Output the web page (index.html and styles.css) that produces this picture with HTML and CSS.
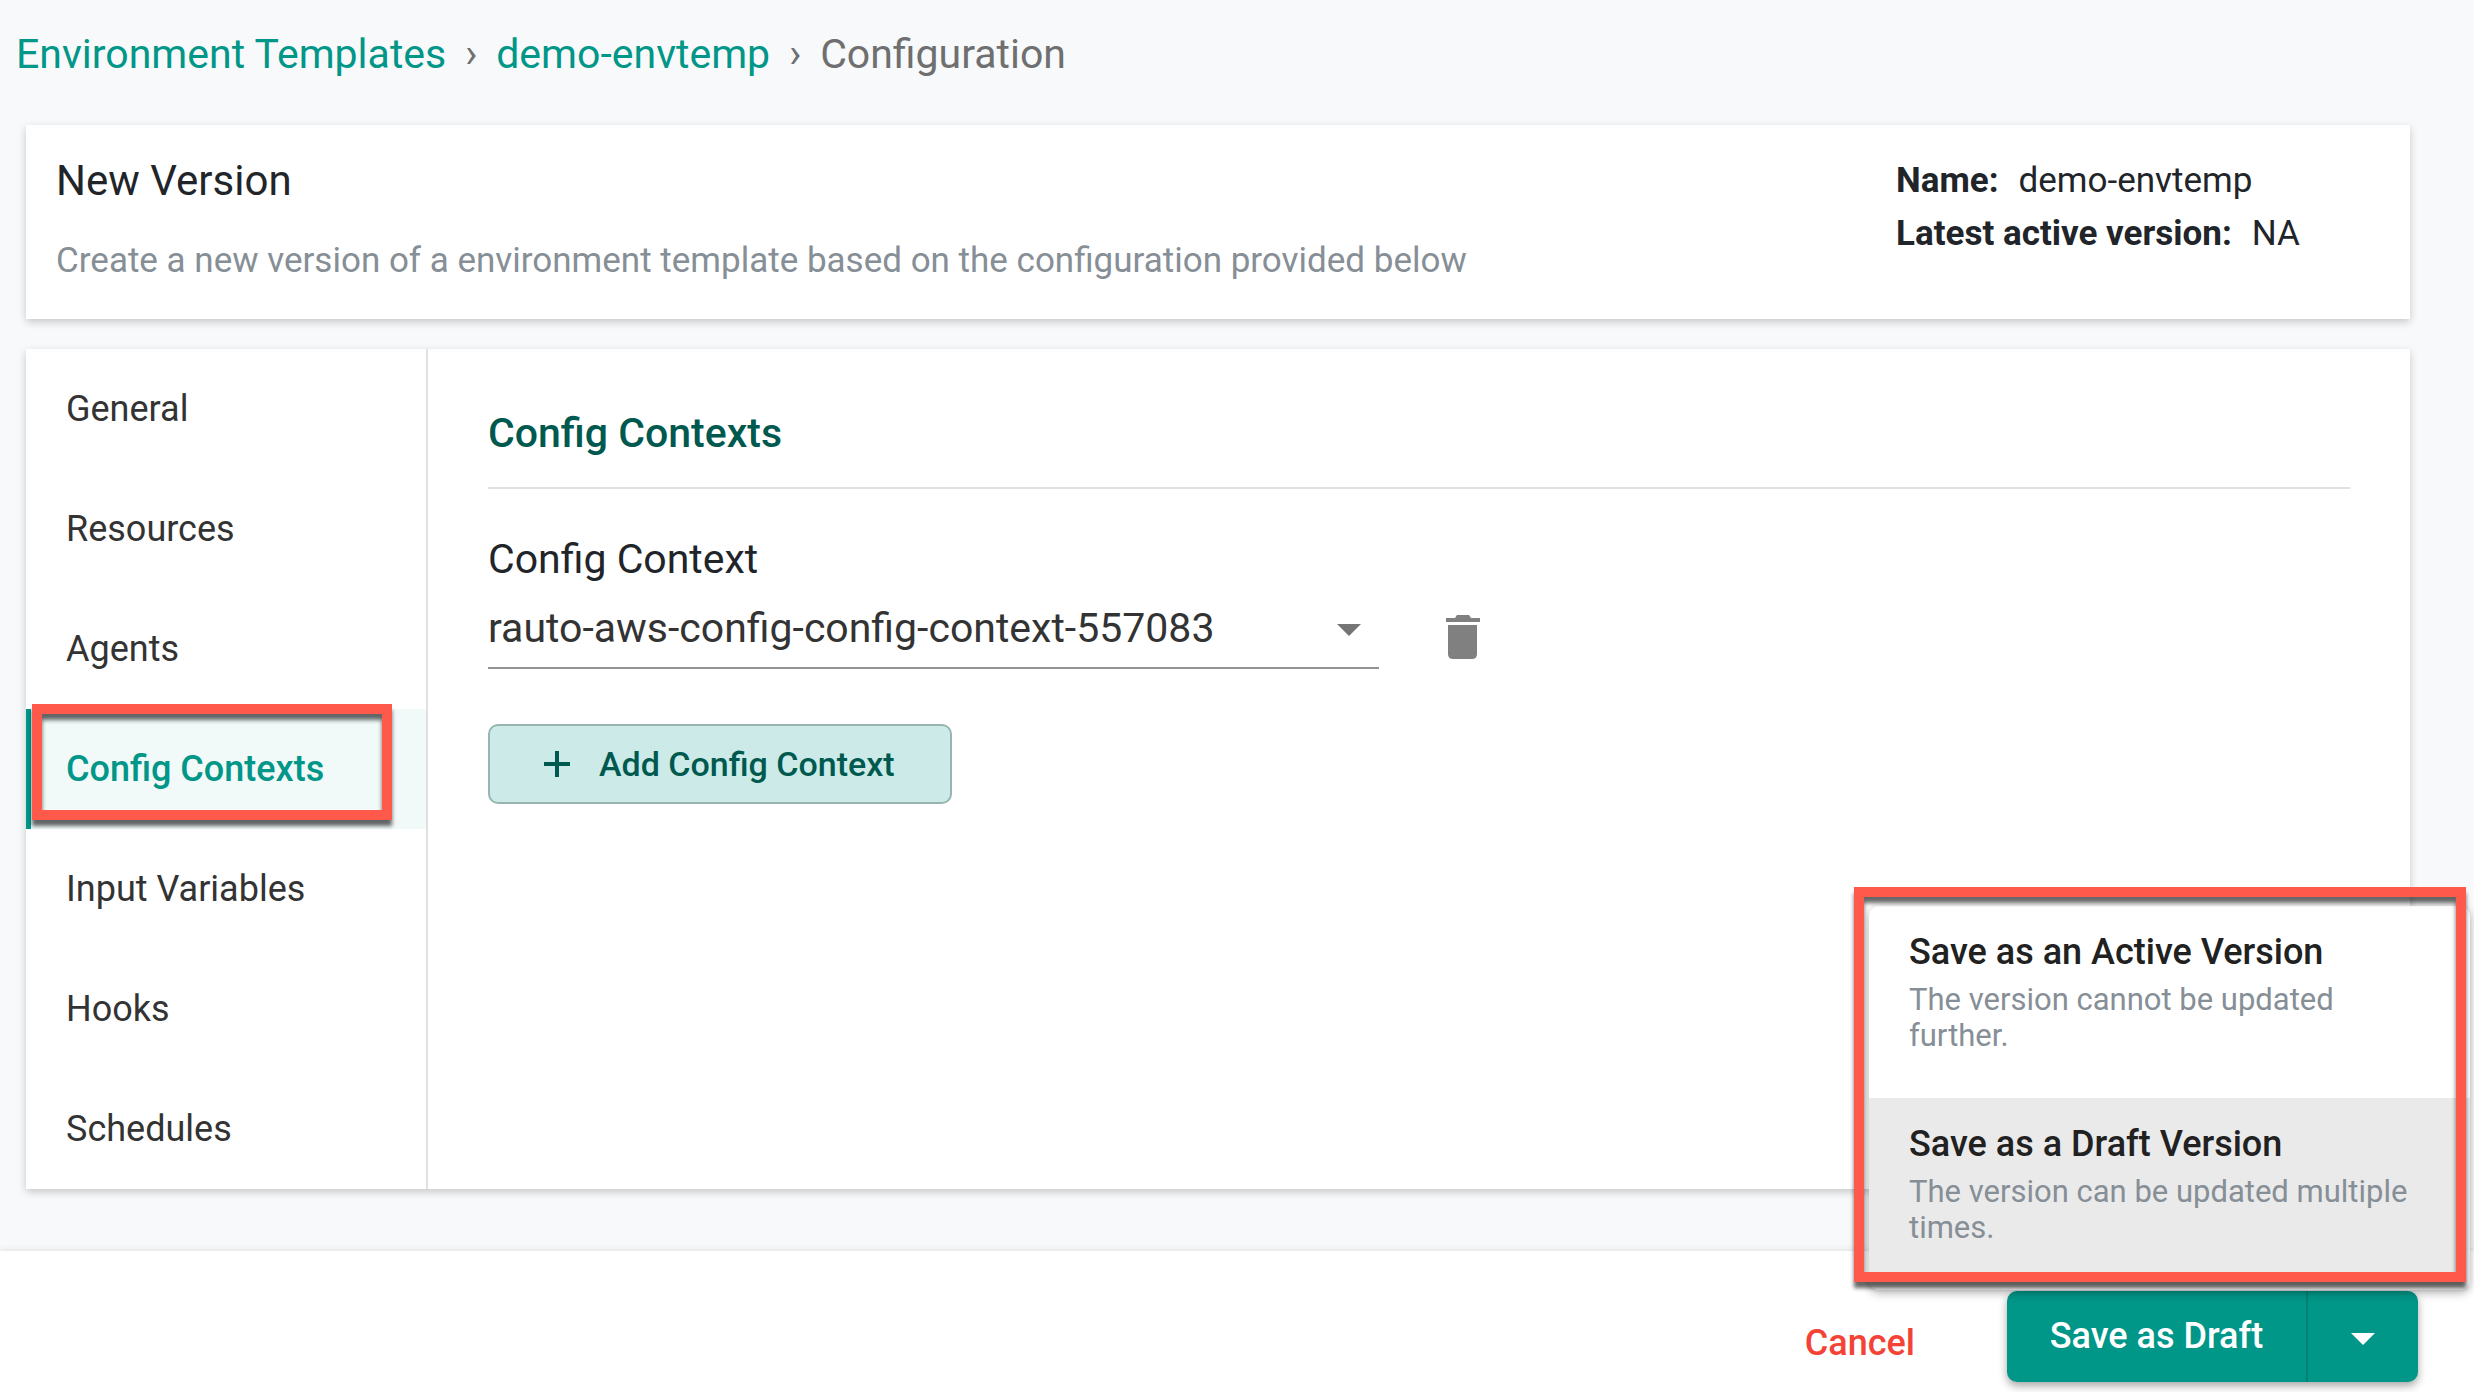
FILE: index.html
```html
<!DOCTYPE html>
<html lang="en">
<head>
<meta charset="utf-8">
<title>New Version</title>
<link rel="stylesheet" href="styles.css">
</head>
<body>
<div class="page">
  <nav class="breadcrumb" aria-label="Breadcrumb">
    <a href="#">Environment Templates</a>
    <span class="sep">›</span>
    <a href="#">demo-envtemp</a>
    <span class="sep">›</span>
    <span>Configuration</span>
  </nav>

  <main class="content">
    <header class="card intro">
      <div class="intro-text">
        <h1>New Version</h1>
        <p>Create a new version of a environment template based on the configuration provided below</p>
      </div>
      <dl class="meta">
        <div><dt>Name:</dt><dd>demo-envtemp</dd></div>
        <div><dt>Latest active version:</dt><dd>NA</dd></div>
      </dl>
    </header>

    <div class="card editor">
      <nav class="tabs" aria-label="Sections">
        <a href="#">General</a>
        <a href="#">Resources</a>
        <a href="#">Agents</a>
        <a href="#" class="active" aria-current="page">Config Contexts<span class="callout callout-tab"></span></a>
        <a href="#">Input Variables</a>
        <a href="#">Hooks</a>
        <a href="#">Schedules</a>
      </nav>
      <section class="panel">
        <h2>Config Contexts</h2>
        <label for="context">Config Context</label>
        <div class="context-row">
          <div class="select">
            <select id="context"><option>rauto-aws-config-config-context-557083</option></select>
            <svg class="arrow" viewBox="0 0 24 12" aria-hidden="true"><path d="M0 0h24L12 12z"/></svg>
          </div>
          <button type="button" class="delete" aria-label="Delete">
            <svg viewBox="0 0 34 44" aria-hidden="true"><path d="M0 3h9l2-3h12l2 3h9v4H0zM2 10h29v29q0 5-5 5H7q-5 0-5-5z"/></svg>
          </button>
        </div>
        <button type="button" class="add">
          <svg viewBox="0 0 28 28" aria-hidden="true"><path d="M14 1v26M1 14h26"/></svg>
          Add Config Context
        </button>
      </section>
    </div>
  </main>

  <footer class="actions">
    <button type="button" class="cancel">Cancel</button>
    <div class="split">
      <button type="button" class="save">Save as Draft</button>
      <button type="button" class="toggle" aria-label="More save options">
        <svg viewBox="0 0 24 12" aria-hidden="true"><path d="M0 0h24L12 12z"/></svg>
      </button>
      <div class="menu">
        <button type="button" class="option">
          <strong>Save as an Active Version</strong>
          <span>The version cannot be updated further.</span>
        </button>
        <button type="button" class="option selected">
          <strong>Save as a Draft Version</strong>
          <span>The version can be updated multiple times.</span>
        </button>
        <span class="callout callout-menu"></span>
      </div>
    </div>
  </footer>
</div>
</body>
</html>
```
FILE: styles.css
```css
* {
  box-sizing: border-box;
}

body {
  margin: 0;
  background: #f8f9fb;
  color: #212529;
  font-family: Roboto, "Liberation Sans", sans-serif;
  font-size: 35px;
  line-height: 53px;
}

button,
select {
  font: inherit;
  color: inherit;
  border: 0;
  background: none;
  padding: 0;
  cursor: pointer;
}

a {
  color: #009688;
  text-decoration: none;
}

.page {
  display: flex;
  flex-direction: column;
  min-height: 100vh;
}

.breadcrumb {
  display: flex;
  align-items: center;
  gap: 19px;
  padding: 22px 16px 0;
  height: 85px;
  line-height: 60px;
  font-size: 41px;
  color: #6f6f6f;
}

.breadcrumb .sep {
  font-size: 40px;
}

.content {
  display: flex;
  flex-direction: column;
  flex: 1;
  gap: 30px;
  padding: 40px 64px 61px 26px;
}

.card {
  background: #fff;
  box-shadow: 0 3px 8px rgba(0, 0, 0, 0.2);
}

.intro {
  display: flex;
  justify-content: space-between;
  padding: 29px 30px 32px;
}

.intro h1 {
  margin: 0 0 26px;
  font-size: 42px;
  font-weight: 400;
  line-height: 54px;
}

.intro p {
  margin: 0;
  color: #868e96;
}

.meta {
  width: 484px;
  margin: 0;
}

.meta div {
  display: flex;
  gap: 20px;
}

.meta dt {
  font-weight: 700;
}

.meta dd {
  margin: 0;
}

.editor {
  display: flex;
}

.tabs {
  display: flex;
  flex-direction: column;
  width: 402px;
  border-right: 2px solid #e0e0e0;
}

.tabs a {
  position: relative;
  display: flex;
  align-items: center;
  height: 120px;
  padding-left: 35px;
  border-left: 5px solid transparent;
  color: #333;
  font-size: 36px;
}

.tabs .active {
  border-left-color: #009688;
  background: #f2f9f9;
  color: #009688;
  font-weight: 500;
}

.panel {
  flex: 1;
  padding: 54px 60px;
}

.panel h2 {
  margin: 0 0 40px;
  padding-bottom: 24px;
  border-bottom: 2px solid #e0e0e0;
  color: #00594f;
  font-size: 41px;
  font-weight: 500;
  line-height: 60px;
}

.panel label {
  display: block;
  font-size: 41px;
  line-height: 60px;
}

.context-row {
  display: flex;
  align-items: flex-end;
  gap: 67px;
}

.select {
  position: relative;
  width: 891px;
  border-bottom: 2px solid #949494;
}

.select select {
  display: block;
  width: 100%;
  height: 78px;
  appearance: none;
  color: #333;
  font-size: 41px;
}

.arrow {
  position: absolute;
  top: 35px;
  right: 18px;
  width: 24px;
  height: 12px;
  fill: #757575;
  pointer-events: none;
}

.delete {
  padding-bottom: 10px;
}

.delete svg {
  display: block;
  width: 34px;
  height: 44px;
  fill: #808080;
}

.add {
  display: flex;
  align-items: center;
  gap: 28px;
  min-width: 464px;
  height: 80px;
  margin-top: 55px;
  padding: 0 48px 0 53px;
  border: 2px solid #99b5b1;
  border-radius: 10px;
  background: #cceae7;
  color: #00594f;
  font-size: 34px;
  font-weight: 500;
}

.add svg {
  width: 28px;
  height: 28px;
  fill: none;
  stroke: currentColor;
  stroke-width: 4;
}

.actions {
  display: flex;
  justify-content: flex-end;
  align-items: flex-start;
  gap: 92px;
  padding: 40px 56px 10px;
  background: #fff;
  box-shadow: 0 0 8px rgba(0, 0, 0, 0.12);
}

.cancel {
  margin-top: 26px;
  color: #f44336;
  font-size: 36px;
  font-weight: 500;
}

.split {
  position: relative;
  display: flex;
  height: 91px;
  border-radius: 10px;
  background: #009688;
  color: #fff;
  box-shadow: 0 4px 8px rgba(0, 0, 0, 0.35);
}

.save {
  min-width: 301px;
  padding: 0 36px;
  border-right: 2px solid #007f73;
  font-size: 36px;
  font-weight: 500;
}

.toggle {
  width: 110px;
}

.toggle svg {
  width: 24px;
  height: 12px;
  fill: #fff;
  vertical-align: middle;
}

.menu {
  position: absolute;
  right: -52px;
  bottom: 92px;
  width: 601px;
  border-radius: 10px;
  background: #fff;
  box-shadow: 0 3px 10px rgba(0, 0, 0, 0.3);
}

.option {
  display: flex;
  flex-direction: column;
  gap: 4px;
  width: 100%;
  height: 192px;
  padding: 20px 40px 0;
  text-align: left;
  color: #868e96;
  font-size: 31px;
  line-height: 36px;
}

.option strong {
  color: #212121;
  font-size: 36px;
  font-weight: 500;
  line-height: 52px;
}

.option.selected {
  border-radius: 0 0 10px 10px;
  background: #eaeaea;
}

.callout {
  position: absolute;
  border: 10px solid #ff594b;
  box-shadow: 0 6px 4px rgba(0, 0, 0, 0.6), inset 0 6px 4px rgba(0, 0, 0, 0.6);
  pointer-events: none;
}

.callout-tab {
  inset: -5px 34px 9px 1px;
}

.callout-menu {
  inset: -19px 4px 8px -15px;
}
```
